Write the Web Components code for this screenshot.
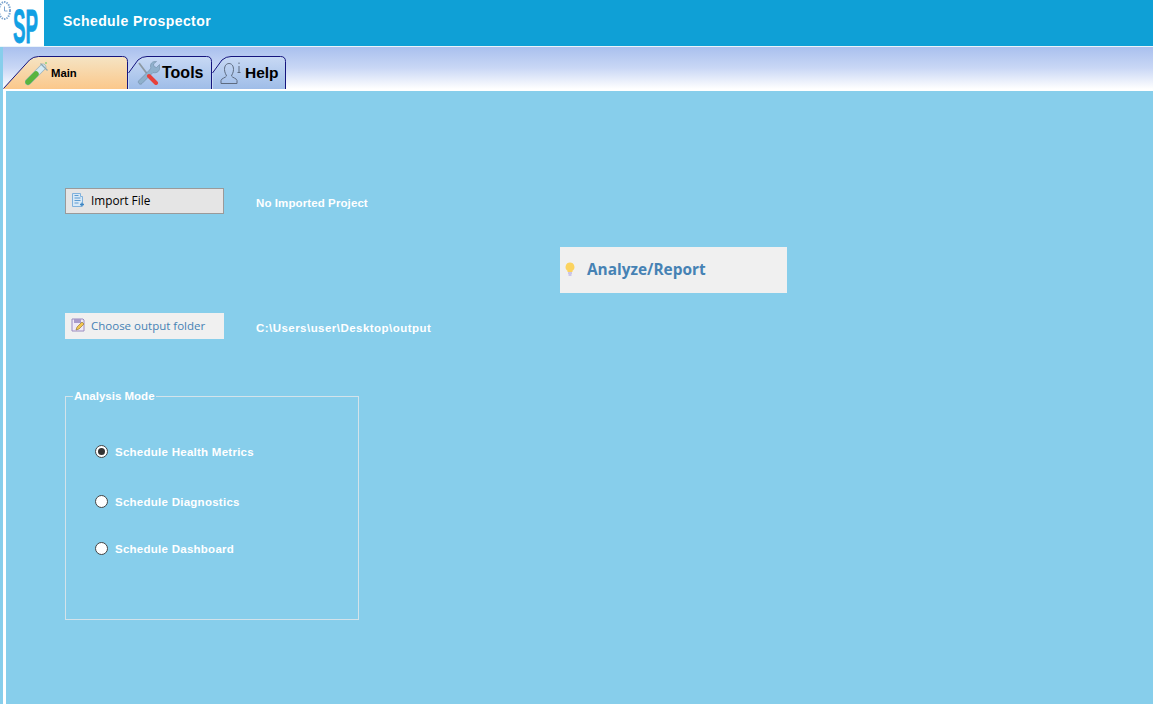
<!DOCTYPE html>
<html>
<head>
<meta charset="utf-8">
<title>Schedule Prospector</title>
<style>
    html, body { margin: 0; height: 100%; overflow: hidden; background: #87ceeb; }
    body { font-family: "Liberation Sans", Arial, sans-serif; }
</style>
</head>
<body>
<sp-app>
    <sp-header slot="header">Schedule Prospector</sp-header>
    <sp-tabs slot="tabs">
        <sp-tab kind="main" width="125" style="--tab-font: bold 11.300px 'Liberation Sans', sans-serif">
            <svg slot="icon" width="26" height="26" viewBox="0 0 26 26" fill="none">
                <path d="M3 22L18 7" stroke="#9fb4bd" stroke-width="6.500" stroke-linecap="round"/>
                <path d="M3 22L18 7" stroke="#d5ebf5" stroke-width="5" stroke-linecap="round"/>
                <path d="M3 22L11 14" stroke="#58b43f" stroke-width="5.500" stroke-linecap="round"/>
                <path d="M15.500 3.500l7 7" stroke="#8aa6b0" stroke-width="1.200"/>
                <circle cx="21" cy="3" r="1" fill="#8ed07a"/>
            </svg>
            Main
        </sp-tab>
        <sp-tab kind="tools" width="84" style="--tab-font: bold 16px 'Liberation Sans', sans-serif; --label-top: 1px">
            <svg slot="icon" width="24" height="24" viewBox="0 0 24 24" fill="none">
                <path d="M2 2L11 14" stroke="#8d99a3" stroke-width="1.800"/>
                <path d="M22.500 3.500l-3 3-2.500-1-.5-2.500 3-2.500c-3-.5-6 1-6 4.500 0 1 .2 1.500.5 2L12 9.500 2 19.500c-1 1-1 2 0 3s2 1 3 0l11-11c.5.2 1 .3 1.700.3 3.500 0 5.500-3 4.800-5.800z" fill="#8fb0cc" stroke="#6e8ba5" stroke-width=".6"/>
                <path d="M12 15L19 22" stroke="#e8403a" stroke-width="4" stroke-linecap="round"/>
            </svg>
            Tools
        </sp-tab>
        <sp-tab kind="help" width="74" style="--tab-font: bold 15.500px 'Liberation Sans', sans-serif; --label-top: 1px">
            <svg slot="icon" width="24" height="24" viewBox="0 0 24 24">
                <path d="M2 22.500v-3c0-2 5-3 5.500-4.500 0-1-2-3-2-6.500C5.500 4.500 7.500 2.500 10 2.500s4.500 2 4.500 6c0 3.500-2 5.500-2 6.500.5 1.500 5.500 2.500 5.500 4.500v3z" fill="none" stroke="#5d6b80" stroke-width="1"/>
                <path d="M20 1.500v1.500M20 5v6.500M18.500 11.500h3" stroke="#5d6b80" stroke-width="1" fill="none"/>
            </svg>
            Help
        </sp-tab>
    </sp-tabs>
    <sp-panel slot="panel">
        <sp-button slot="import" variant="pressed">
            <svg slot="icon" width="16" height="16" viewBox="0 0 16 16">
                <path d="M2.500 1.500h8v3h2v6l-1 4h-9z" fill="#d8e9f6" stroke="#7fb1dc"/>
                <path d="M4.500 6h6M4.500 8.500h6M4.500 11h4M4.500 3.500h4" stroke="#5c9bd1"/>
                <path d="M12 10.500v4M10 12.500h4" stroke="#3f87c4" stroke-width="1.300"/>
            </svg>
            Import File
        </sp-button>
        <sp-label slot="status" style="--track: .1px">No Imported Project</sp-label>
        <sp-button slot="analyze" variant="big">
            <svg slot="icon" width="14" height="16" viewBox="0 0 14 16">
                <path d="M7 1.500a4.500 4.500 0 0 1 2.500 8.200V11h-5V9.700A4.500 4.500 0 0 1 7 1.500z" fill="#fbd35f"/>
                <path d="M5 12h4M5.500 14h3" stroke="#a69adf" stroke-width="1.200"/>
            </svg>
            Analyze/Report
        </sp-button>
        <sp-button slot="output" variant="flat">
            <svg slot="icon" width="16" height="16" viewBox="0 0 16 16">
                <path d="M2 2h11l1 1v11H2z" fill="#efe9f6" stroke="#9a8cc0"/>
                <path d="M4 2h7v4H4z" fill="#a99bcb"/>
                <path d="M6 13l1-3 5-5 2 2-5 5z" fill="#f3c64f" stroke="#8a6d26" stroke-width=".6"/>
            </svg>
            Choose output folder
        </sp-button>
        <sp-label slot="path" style="--track: .46px">C:\Users\user\Desktop\output</sp-label>
        <sp-group slot="mode" legend="Analysis Mode">
            <sp-radio checked style="--radio-top: 42px">Schedule Health Metrics</sp-radio>
            <sp-radio style="--radio-top: 37px">Schedule Diagnostics</sp-radio>
            <sp-radio style="--radio-top: 34px">Schedule Dashboard</sp-radio>
        </sp-group>
    </sp-panel>
</sp-app>

<template id="sp-app">
    <style>
        :host { display: flex; flex-direction: column; height: 704px; }
    </style>
    <slot name="header"></slot>
    <slot name="tabs"></slot>
    <slot name="panel"></slot>
</template>

<template id="sp-header">
    <style>
        :host {
            display: flex;
            align-items: center;
            height: 46px;
            background: #0fa0d6;
            border-bottom: 1px solid #eaf4fa;
            flex: none;
        }
        .logo {
            width: 44px;
            height: 46px;
            background: #fff;
            flex: none;
        }
        .logo svg { overflow: visible; display: block; }
        .logo text {
            font: bold 30px "Liberation Sans", sans-serif;
            fill: #12a0e4;
            stroke: #12a0e4;
            stroke-width: .5px;
        }
        .title {
            margin: 0 0 4px 19px;
            font: bold 14px "Liberation Sans", sans-serif;
            letter-spacing: .42px;
            color: #fff;
        }
    </style>
    <div class="logo">
        <svg width="44" height="56" viewBox="0 0 44 56">
            <ellipse cx="4.500" cy="10.500" rx="5.500" ry="8.500" fill="none" stroke="#7fa6cf" stroke-width="2" stroke-dasharray="1.500 1"/>
            <path d="M4.500 6.500v4.500h3" fill="none" stroke="#7fa6cf"/>
            <text transform="translate(13 43) scale(1 1.580)" textLength="25" lengthAdjust="spacingAndGlyphs">SP</text>
        </svg>
    </div>
    <div class="title"><slot></slot></div>
</template>

<template id="sp-tabs">
    <style>
        :host {
            display: flex;
            align-items: flex-end;
            height: 42px;
            margin-left: 3px;
            box-sizing: border-box;
            background: linear-gradient(#a9c0ee, #c9d7f5 50%, #fff 100%);
            flex: none;
        }
    </style>
    <slot></slot>
</template>

<template id="sp-tab">
    <style>
        :host {
            position: relative;
            display: block;
            height: 33px;
            flex: none;
        }
        svg.shape { position: absolute; left: 0; top: 0; }
        .body {
            position: relative;
            display: flex;
            align-items: center;
            height: 100%;
            font: var(--tab-font);
            color: #000;
            white-space: nowrap;
        }
        .label { padding-top: var(--label-top, 0); }
    </style>
    <svg class="shape" height="33" fill="none"></svg>
    <div class="body">
        <slot name="icon"></slot>
        <span class="label"><slot></slot></span>
    </div>
</template>

<template id="sp-panel">
    <style>
        :host {
            flex: 1;
            display: grid;
            grid-template-columns: 159px 336px 227px;
            grid-template-rows: 26px 33px 46px 20px 26px 51px 230px;
            padding: 97px 0 0 59px;
            margin-left: 3px;
            background: #87ceeb;
            border-left: 3px solid #fff;
            border-top: 2px solid #fff;
        }
        ::slotted([slot="import"]) { grid-area: 1 / 1; }
        ::slotted([slot="status"]) { grid-area: 1 / 2; }
        ::slotted([slot="analyze"]) { grid-area: 3 / 3; }
        ::slotted([slot="output"]) { grid-area: 5 / 1; }
        ::slotted([slot="path"]) { grid-area: 5 / 2; }
        ::slotted([slot="mode"]) { grid-area: 7 / 1 / 7 / 3; }
    </style>
    <slot name="import"></slot>
    <slot name="status"></slot>
    <slot name="analyze"></slot>
    <slot name="output"></slot>
    <slot name="path"></slot>
    <slot name="mode"></slot>
</template>

<template id="sp-button">
    <style>
        :host {
            display: flex;
            align-items: center;
            box-sizing: border-box;
            padding: 0 0 2px 5px;
            gap: 5px;
            font: 11.500px "Open Sans", sans-serif;
            color: #4682b4;
            background: #f0f0f0;
            white-space: nowrap;
        }
        :host([variant="pressed"]) {
            background: #e5e5e5;
            border: 1px solid #9a9a9a;
            color: #000;
            padding-left: 4px;
            font-size: 11.800px;
        }
        :host([variant="big"]) {
            font: bold 15.400px "Open Sans", sans-serif;
            padding-left: 3px;
            gap: 10px;
        }
        .icon { display: flex; flex: none; }
    </style>
    <span class="icon"><slot name="icon"></slot></span>
    <slot></slot>
</template>

<template id="sp-label">
    <style>
        :host {
            display: flex;
            align-items: center;
            padding: 3px 0 0 32px;
            font: bold 11.500px "Liberation Sans", sans-serif;
            letter-spacing: var(--track, 0);
            color: #fff;
            white-space: nowrap;
        }
    </style>
    <slot></slot>
</template>

<template id="sp-group">
    <style>
        :host { display: block; width: 294px; }
        fieldset {
            box-sizing: border-box;
            height: 230px;
            margin: 0;
            padding: 0;
            border: 1px solid #d3e3ea;
        }
        legend {
            margin-left: 7px;
            padding: 0 1px;
            font: bold 11.500px "Liberation Sans", sans-serif;
            line-height: 13px;
            color: #fff;
        }
        .items { padding-left: 29px; }
    </style>
    <fieldset>
        <legend></legend>
        <div class="items"><slot></slot></div>
    </fieldset>
</template>

<template id="sp-radio">
    <style>
        :host {
            display: flex;
            align-items: center;
            gap: 7px;
            height: 13px;
            margin-top: var(--radio-top);
            font: bold 11.500px "Liberation Sans", sans-serif;
            letter-spacing: .26px;
            color: #fff;
            white-space: nowrap;
        }
        .dot {
            box-sizing: border-box;
            width: 13px;
            height: 13px;
            flex: none;
            border: 1px solid #444;
            border-radius: 50%;
            background: #fff;
            display: grid;
            place-items: center;
        }
        :host([checked]) .dot::after {
            content: "";
            width: 7px;
            height: 7px;
            border-radius: 50%;
            background: #333;
        }
    </style>
    <span class="dot"></span>
    <slot></slot>
</template>

<script>
    // small helper: every element just clones its template into an open shadow root
    function shadowElement(name) {
        class Element extends HTMLElement {
            constructor() {
                super();
                this.attachShadow({ mode: 'open' });
                this.shadowRoot.appendChild(document.getElementById(name).content.cloneNode(true));
            }
        }
        return Element;
    }

    ['sp-app', 'sp-header', 'sp-tabs', 'sp-panel', 'sp-button', 'sp-label', 'sp-radio'].forEach(name => {
        customElements.define(name, shadowElement(name));
    });

    const TAB_STYLES = {
        main: { from: '#f5e4c4', to: '#fbc88b', pad: 22, gap: 0 },
        tools: { from: '#c8d9f4', to: '#9fbde8', pad: 9, gap: 1 },
        help: { from: '#c8d9f4', to: '#9fbde8', pad: 7, gap: 2 }
    };

    class SpTab extends shadowElement('sp-tab') {
        connectedCallback() {
            const kind = this.getAttribute('kind');
            const style = TAB_STYLES[kind];
            const width = Number(this.getAttribute('width'));
            this.style.width = width + 'px';

            const right = width - 0.5;
            const start = kind === 'main' ? 32.5 : 16;
            const foot = kind === 'main' ? 32.5 : 17;
            const outline = `M0.500 ${foot}L${start - 6} 4Q${start - 2} 0.500 ${start + 3} 0.500H${right - 5}Q${right} 0.500 ${right} 5.500V33`;

            const shape = this.shadowRoot.querySelector('svg.shape');
            shape.setAttribute('width', width);
            shape.innerHTML = `
                <defs>
                    <linearGradient id="fill" x1="0" y1="0" x2="0" y2="1">
                        <stop offset="0" stop-color="${style.from}"/>
                        <stop offset="1" stop-color="${style.to}"/>
                    </linearGradient>
                </defs>
                <path d="${outline}V33H0.500z" fill="url(#fill)"/>
                <path d="${outline}" stroke="#15157e"/>`;

            const body = this.shadowRoot.querySelector('.body');
            body.style.paddingLeft = style.pad + 'px';
            body.style.gap = style.gap + 'px';
        }
    }
    customElements.define('sp-tab', SpTab);

    class SpGroup extends shadowElement('sp-group') {
        connectedCallback() {
            this.shadowRoot.querySelector('legend').textContent = this.getAttribute('legend');
        }
    }
    customElements.define('sp-group', SpGroup);
</script>
</body>
</html>
